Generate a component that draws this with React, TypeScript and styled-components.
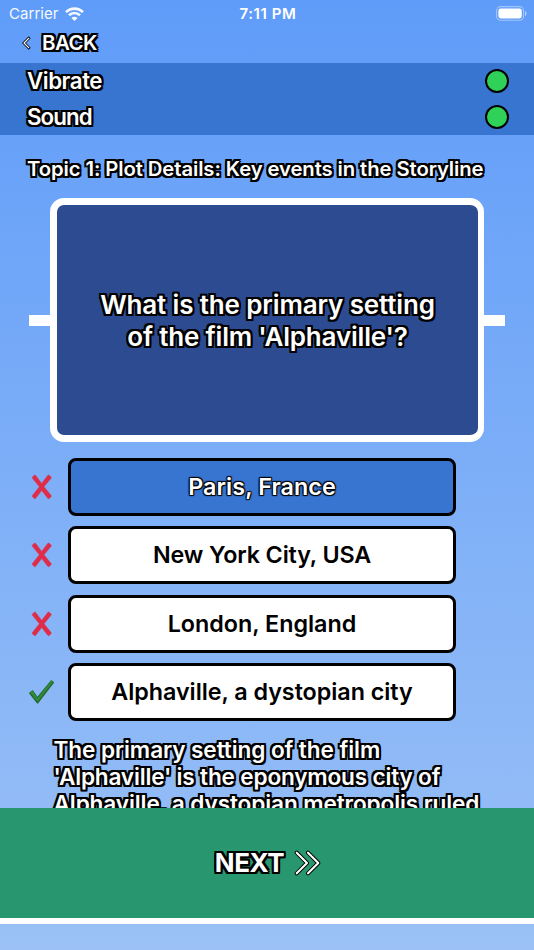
import React from "react";
import styled, { createGlobalStyle, css } from "styled-components";

const GlobalStyle = createGlobalStyle`
  *, *::before, *::after { box-sizing: border-box; }
  html, body { margin: 0; padding: 0; }
  body { font-family: Inter, "Liberation Sans", sans-serif; }
`;

const outline = css`
  color: #fff;
  text-shadow: -2px -2px 0 #000, 2px -2px 0 #000, -2px 2px 0 #000, 2px 2px 0 #000,
    0 -2px 0 #000, 0 2px 0 #000, -2px 0 0 #000, 2px 0 0 #000;
`;

const Screen = styled.div`
  width: 534px;
  height: 950px;
  overflow: hidden;
  display: flex;
  flex-direction: column;
  background: linear-gradient(180deg, #5f9cf9 0%, #9bc1f6 100%);
`;

const StatusBar = styled.header`
  height: 27px;
  flex: none;
  display: grid;
  grid-template-columns: 1fr auto 1fr;
  align-items: center;
  padding: 0 7px 0 9px;
  color: #fff;
`;

const Carrier = styled.div`
  display: flex;
  align-items: center;
  gap: 6px;
  font-size: 15px;
  line-height: 20px;
  letter-spacing: 0.05px;
  opacity: 0.95;
`;

const Clock = styled.div`
  font-size: 15px;
  line-height: 20px;
  font-weight: 600;
  letter-spacing: 0.6px;
  padding-top: 1px;
  white-space: nowrap;
`;

const BatterySlot = styled.div`
  display: flex;
  justify-content: flex-end;
`;

const BackButton = styled.div`
  height: 36px;
  flex: none;
  display: flex;
  align-items: center;
  gap: 11px;
  padding: 0 0 4px 21px;
`;

const BackLabel = styled.span`
  ${outline}
  font-size: 20.5px;
  font-weight: 600;
  line-height: 26px;
  letter-spacing: -0.55px;
`;

const Settings = styled.section`
  flex: none;
  height: 72px;
  background: #3875d1;
`;

const SettingRow = styled.div`
  height: 36px;
  display: flex;
  align-items: center;
  justify-content: space-between;
  padding: 0 25.5px 1px 27px;
`;

const SettingLabel = styled.span<{ $spacing: number }>`
  ${outline}
  font-size: 22.3px;
  font-weight: 600;
  line-height: 28px;
  letter-spacing: ${(p) => p.$spacing}px;
`;

const Indicator = styled.span`
  width: 24px;
  height: 24px;
  border: 2.5px solid #000;
  border-radius: 50%;
  background: #30d158;
`;

const Topic = styled.h1`
  ${outline}
  margin: 0;
  flex: none;
  height: 63px;
  padding: 21px 0 0 27px;
  font-size: 20.3px;
  font-weight: 600;
  line-height: 26px;
  letter-spacing: -0.1px;
  white-space: nowrap;
`;

const QuestionBand = styled.section`
  flex: none;
  height: 244px;
  margin: 0 29px;
  display: flex;
  justify-content: center;
  background: linear-gradient(#fff, #fff) center 117px / 100% 11px no-repeat;
`;

const QuestionCard = styled.div`
  width: 434px;
  height: 244px;
  padding-top: 2px;
  border: 7px solid #fff;
  border-right-width: 6px;
  border-radius: 14px;
  background: #2d4b91;
  display: flex;
  flex-direction: column;
  align-items: center;
  justify-content: center;
`;

const QuestionLine = styled.span<{ $spacing: number }>`
  ${outline}
  font-size: 26px;
  font-weight: 600;
  line-height: 32px;
  letter-spacing: ${(p) => p.$spacing}px;
  white-space: nowrap;
`;

const Answers = styled.div`
  flex: none;
  display: flex;
  flex-direction: column;
  gap: 10.4px;
  padding-top: 16px;
`;

const AnswerRow = styled.div`
  height: 58px;
  display: grid;
  grid-template-columns: 26px 388px;
  column-gap: 13px;
  align-items: center;
  margin-left: 29px;
`;

const AnswerBox = styled.div<{ $selected?: boolean; $spacing: number }>`
  height: 58px;
  padding-bottom: 1px;
  border: 3px solid #000;
  border-radius: 8px;
  display: flex;
  align-items: center;
  justify-content: center;
  font-size: 23.3px;
  font-weight: 600;
  white-space: nowrap;
  letter-spacing: ${(p) => p.$spacing}px;
  background: ${(p) => (p.$selected ? "#3875d1" : "#fff")};
  color: ${(p) => (p.$selected ? "#fff" : "#000")};
  text-shadow: ${(p) =>
    p.$selected
      ? "-1px -1px 1px #000, 1px -1px 1px #000, -1px 1px 1px #000, 1px 1px 1px #000"
      : "none"};
`;

const Explanation = styled.div`
  flex: 1;
  min-height: 0;
  overflow: hidden;
  padding: 14.5px 0 0 53.5px;
`;

const ExplanationLine = styled.div<{ $spacing: number }>`
  ${outline}
  font-size: 22.6px;
  font-weight: 600;
  line-height: 27px;
  letter-spacing: ${(p) => p.$spacing}px;
  white-space: nowrap;
`;

const NextButton = styled.div`
  flex: none;
  height: 116px;
  border-bottom: 6px solid #fff;
  background: #28966f;
  display: flex;
  align-items: center;
  justify-content: center;
  gap: 10px;
  padding-left: 2px;
`;

const NextLabel = styled.span`
  ${outline}
  font-size: 26px;
  font-weight: 700;
  line-height: 32px;
  letter-spacing: -0.4px;
`;

const HomeArea = styled.div`
  flex: none;
  height: 26px;
`;

const WifiIcon = () => (
  <svg width="19" height="14" viewBox="0 0 19 14" fill="none" stroke="#fff" strokeWidth="2.6">
    <path d="M1 5.1C5.7.5 13.3.5 18 5.1" />
    <path d="M4 8.2c3.1-3 7.9-3 11 0" />
    <path d="M9.5 14L6.4 10.9c1.8-1.6 4.4-1.6 6.2 0z" fill="#fff" stroke="none" />
  </svg>
);

const BatteryIcon = () => (
  <svg width="31" height="15" viewBox="0 0 31 15">
    <rect x=".6" y=".6" width="27" height="13.6" rx="4" fill="none" stroke="#fff" strokeOpacity=".42" strokeWidth="1.1" />
    <rect x="2.4" y="2.4" width="23.4" height="10" rx="2.4" fill="#fff" />
    <path d="M29 5v5c2-.6 2-4.4 0-5z" fill="#fff" fillOpacity=".5" />
  </svg>
);

const BackChevron = () => (
  <svg width="10" height="14" viewBox="0 0 10 14" fill="none" strokeLinecap="square">
    <path d="M7.7 2.3L3 7l4.7 4.7" stroke="#000" strokeWidth="2.8" />
    <path d="M7.7 2.3L3 7l4.7 4.7" stroke="#fff" strokeWidth="1.2" />
  </svg>
);

const NextChevrons = () => (
  <svg width="27" height="26" viewBox="0 0 27 26" fill="none" strokeLinecap="round" strokeLinejoin="round">
    {["M2.7 2.7L13 13 2.7 23.3", "M14 2.7L24.3 13 14 23.3"].map((d) => (
      <React.Fragment key={d}>
        <path d={d} stroke="#000" strokeWidth="4" />
        <path d={d} stroke="#fff" strokeWidth="2.1" />
      </React.Fragment>
    ))}
  </svg>
);

const CrossMark = () => (
  <svg width="26" height="26" viewBox="0 0 26 26">
    <path
      d="M3.4 3.1L5.3 1.2q.8-.5 1.4.3l6 7.9 6-7.9q.6-.8 1.4-.3l2 1.8q.5.6 0 1.2L15 12.8l7.1 8.7q.5.6 0 1.2l-2 1.8q-.8.5-1.4-.3l-6-7.7-6 7.7q-.6.8-1.4.3l-1.9-1.8q-.5-.6 0-1.2l7-8.7-7-8.5q-.5-.6 0-1.2z"
      fill="#df2d49"
      stroke="#df2d49"
      strokeWidth=".5"
    />
  </svg>
);

const CheckMark = () => (
  <svg width="26" height="26" viewBox="0 0 26 26">
    <path d="M.4 13.4l2.7-2q.6-.4 1 .2l4.3 6.1L21.8 1.6q.5-.6 1.1-.1l1.8 1.3q.5.5.1 1.1L9.4 24q-.9 1.2-1.7 0L.2 14.4q-.4-.6.2-1z" fill="#24662b" />
    <path d="M.8 13.3l2.2-1.6q.6-.4 1 .2l4.4 7.3L22 2q.5-.6 1-.1l1.1.9L8.6 22.8z" fill="#2f8a3e" />
  </svg>
);

const answers = [
  { text: "Paris, France", spacing: 0.08, selected: true, correct: false },
  { text: "New York City, USA", spacing: -0.12, selected: false, correct: false },
  { text: "London, England", spacing: 0, selected: false, correct: false },
  { text: "Alphaville, a dystopian city", spacing: -0.03, selected: false, correct: true },
];

const explanation = [
  { text: "The primary setting of the film", spacing: -0.09 },
  { text: "'Alphaville' is the eponymous city of", spacing: -0.18 },
  { text: "Alphaville, a dystopian metropolis ruled", spacing: -0.11 },
];

export default function App() {
  return (
    <>
      <GlobalStyle />
      <Screen>
        <StatusBar>
          <Carrier>
            Carrier <WifiIcon />
          </Carrier>
          <Clock>7:11 PM</Clock>
          <BatterySlot>
            <BatteryIcon />
          </BatterySlot>
        </StatusBar>
        <BackButton>
          <BackChevron />
          <BackLabel>BACK</BackLabel>
        </BackButton>
        <Settings>
          <SettingRow>
            <SettingLabel $spacing={-0.45}>Vibrate</SettingLabel>
            <Indicator />
          </SettingRow>
          <SettingRow>
            <SettingLabel $spacing={-0.9}>Sound</SettingLabel>
            <Indicator />
          </SettingRow>
        </Settings>
        <Topic>Topic 1: Plot Details: Key events in the Storyline</Topic>
        <QuestionBand>
          <QuestionCard>
            <QuestionLine $spacing={-0.14}>What is the primary setting</QuestionLine>
            <QuestionLine $spacing={-0.2}>of the film 'Alphaville'?</QuestionLine>
          </QuestionCard>
        </QuestionBand>
        <Answers>
          {answers.map((a) => (
            <AnswerRow key={a.text}>
              {a.correct ? <CheckMark /> : <CrossMark />}
              <AnswerBox $selected={a.selected} $spacing={a.spacing}>
                {a.text}
              </AnswerBox>
            </AnswerRow>
          ))}
        </Answers>
        <Explanation>
          {explanation.map((line) => (
            <ExplanationLine key={line.text} $spacing={line.spacing}>
              {line.text}
            </ExplanationLine>
          ))}
        </Explanation>
        <NextButton>
          <NextLabel>NEXT</NextLabel>
          <NextChevrons />
        </NextButton>
        <HomeArea />
      </Screen>
    </>
  );
}
